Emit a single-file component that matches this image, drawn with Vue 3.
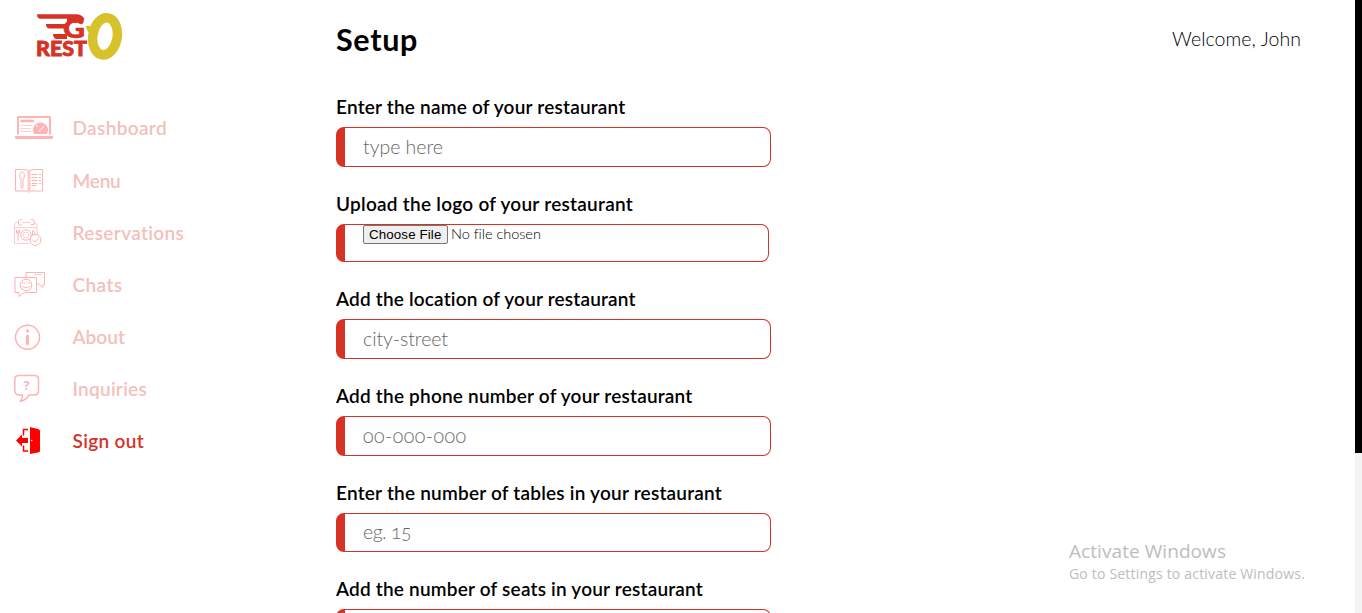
<script setup>
const vFit = {
  mounted(el, { value }) {
    const range = document.createRange()
    range.selectNodeContents(el)
    const natural = range.getBoundingClientRect().width
    const count = el.textContent.trim().length
    el.style.letterSpacing = `${(value - natural) / count}px`
  },
}

const nav = [
  { id: 'dashboard', label: 'Dashboard', fit: 94.5 },
  { id: 'menu', label: 'Menu', fit: 48 },
  { id: 'reservations', label: 'Reservations', fit: 112 },
  { id: 'chats', label: 'Chats', fit: 50 },
  { id: 'about', label: 'About', fit: 52.5 },
  { id: 'inquiries', label: 'Inquiries', fit: 74.5 },
  { id: 'signout', label: 'Sign out', fit: 71.5, active: true },
]

const fields = [
  { label: 'Enter the name of your restaurant', fit: 289.5, hint: 'type here', hintFit: 80 },
  { label: 'Upload the logo of your restaurant', fit: 297, file: true },
  { label: 'Add the location of your restaurant', fit: 300, hint: 'city-street', hintFit: 85 },
  { label: 'Add the phone number of your restaurant', fit: 356.5, hint: '00-000-000', hintFit: 103.5 },
  { label: 'Enter the number of tables in your restaurant', fit: 386, hint: 'eg. 15', hintFit: 48 },
  { label: 'Add the number of seats in your restaurant', fit: 367, hint: '' },
]
</script>

<template>
  <div class="page">
    <aside class="sidebar">
      <svg class="logo" width="88" height="50" viewBox="0 0 88 50">
        <path d="M1 2.300H40Q46 2.500 48.500 7L46 10.500Q42 6.800 36 6.800H4Q1 6.500 1 2.300Z" fill="#d63226" />
        <path d="M10 12H31L29 16.500H13Q10 16 10 12ZM17 22H31L31 27H20Q17 26 17 22Z" fill="#d63226" />
        <path d="M31 6H42L36 10L31 14Z" fill="#d63226" />
        <text x="27" y="26.300" class="logo-g" textLength="22" lengthAdjust="spacingAndGlyphs">G</text>
        <text x="0" y="44.300" class="logo-rest" textLength="51" lengthAdjust="spacingAndGlyphs">REST</text>
        <path d="M49.500 14H55L54 20H52Z" fill="#d8c22c" />
        <ellipse cx="69" cy="24.300" rx="12.200" ry="18.700" transform="rotate(9 69 24.300)" fill="none" stroke="#d8c22c" stroke-width="9.500" />
      </svg>
      <nav class="nav">
        <a v-for="item in nav" :key="item.id" class="nav-item" :class="{ active: item.active }">
          <span class="icon">
            <svg v-if="item.id === 'dashboard'" width="40" height="30" viewBox="0 0 40 30">
              <path d="M4 21.500V4.500Q4 4 4.500 4H35.500Q36 4 36 4.500V21.500" class="line frame" />
              <path d="M1 23H39V24.500Q39 26 37 26H3Q1 26 1 24.500Z" fill="currentColor" />
              <path d="M6.500 8H20" class="line bar" />
              <path d="M6.500 12.500H18M6.500 15.500H17M6.500 18.500H17" class="line faint" />
              <path d="M20 21A7.600 7.600 0 1 1 33 21Z" fill="currentColor" />
              <path d="M25 18.500L30 13M22.500 12.500L23.500 13.500" class="mark" />
            </svg>
            <svg v-else-if="item.id === 'menu'" width="40" height="30" viewBox="0 0 40 30">
              <path d="M15 5Q13 3.500 9 3.500H1.500V25H13Q14 25 15 26.500Q16 25 17 25H28.500V3.500H21Q17 3.500 15 5ZM14.200 5V25M15.800 5V25" class="line" />
              <path d="M8 6C6.500 6 5.500 8 5.500 10C5.500 11.500 6.500 12.500 7 13.500V21Q8 23 9 21V13.500C9.500 12.500 10.500 11.500 10.500 10C10.500 8 9.500 6 8 6Z" class="line" />
              <path d="M17.500 8.500H23.500M17.500 11.500H23.500M17.500 14.500H23.500M17.500 17.500H23.500M17.500 19.500H22.500M25 8.500H27M25 11.500H27M25 14.500H27M25 17.500H27" class="line" />
            </svg>
            <svg v-else-if="item.id === 'reservations'" width="40" height="30" viewBox="0 0 40 30">
              <path d="M.5 6V25.500H15M23 6V17M.5 9.500H23M.5 6.500L2 4H4M8 4.500H17M21 4L23 6.500" class="line faint" />
              <path d="M4.500 6.500V3L6 1.500H8M5 7H8M17 1.500H19L20 3V6.500H17" class="line" />
              <path d="M2.500 12V15H5.500V12M4 12V23M18.500 22V13Q21 12 21 17H19" class="line" />
              <circle cx="12" cy="17" r="5.200" class="line" />
              <circle cx="12" cy="17" r="3" class="line faint" />
              <circle cx="21.500" cy="22" r="5.500" class="line solid" />
              <path d="M18.500 22L21 24L25 19.500" class="line" />
            </svg>
            <svg v-else-if="item.id === 'chats'" width="40" height="30" viewBox="0 0 40 30">
              <path d="M12 7.500V2.500H30.500V14.500H29V17.500L24.500 14H23" class="line" />
              <path d="M20 4.500H28" class="line faint" />
              <path d="M1 7.500H22.500V22.500H10.500L5 26.500V22.500H1Z" class="line" />
              <circle cx="12" cy="15" r="5.800" class="line" />
              <path d="M8 13.500L9.500 12.500L11 13.500M13 13.500L14.500 12.500L16 13.500M8.500 16Q12 19.500 15.500 16" class="line" />
            </svg>
            <svg v-else-if="item.id === 'about'" width="40" height="30" viewBox="0 0 40 30">
              <circle cx="13.500" cy="15.200" r="12" class="line ring" />
              <circle cx="13.500" cy="8.900" r="1.600" fill="currentColor" />
              <rect x="12" y="12.700" width="3" height="10.500" rx="1.400" fill="currentColor" />
            </svg>
            <svg v-else-if="item.id === 'inquiries'" width="40" height="30" viewBox="0 0 40 30">
              <path d="M5 1.500H20Q24.500 1.500 24.500 5.700V16.700Q24.500 20.900 20 20.900H15Q12 26.700 6.500 27.200Q9 23.700 8.500 20.900H5Q.8 20.700 .8 16.700V5.700Q.8 1.500 5 1.500Z" class="line ring" />
              <text x="12.500" y="16" class="question">?</text>
            </svg>
            <svg v-else width="40" height="30" viewBox="0 0 40 30">
              <path d="M16 1L24 3Q26 3.500 26 4.500V25Q26 26 24 26.500L16 28Z" fill="currentColor" />
              <path d="M2 14.500L8 8.500V12H14V17H8V20.500Z" fill="currentColor" />
              <path d="M9.500 9.500V3.500H14M9.500 19.500V25H14" class="line thick" />
              <circle cx="17.700" cy="14.500" r=".8" fill="#fff" />
            </svg>
          </span>
          <span v-fit="item.fit" class="nav-label">{{ item.label }}</span>
        </a>
      </nav>
    </aside>

    <main class="content">
      <header class="header">
        <h1 v-fit="82" class="title">Setup</h1>
        <span v-fit="129" class="welcome">Welcome, John</span>
      </header>
      <form class="form">
        <div v-for="field in fields" :key="field.label" class="field">
          <div class="label"><span v-fit="field.fit">{{ field.label }}</span></div>
          <div class="input" :class="{ file: field.file, short: field.hint === 'eg. 15' }">
            <template v-if="field.file">
              <span class="choose"><span v-fit="72.500">Choose File</span></span>
              <span v-fit="89.500" class="filename">No file chosen</span>
            </template>
            <span v-else-if="field.hint" v-fit="field.hintFit" class="hint">{{ field.hint }}</span>
          </div>
        </div>
      </form>
    </main>

    <div class="scroll"><div class="thumb"></div></div>

    <div class="watermark">
      <div class="wm-title"><span v-fit="157">Activate Windows</span></div>
      <div class="wm-sub"><span v-fit="236">Go to Settings to activate Windows.</span></div>
    </div>
  </div>
</template>

<style>
html, body { margin: 0; overflow: hidden; background: #fff; }
</style>

<style scoped>
.page {
  display: flex;
  position: relative;
  width: 1362px;
  height: 613px;
  overflow: hidden;
  background: #fff;
  color: #000;
  font-family: Lato, "Open Sans", sans-serif;
  white-space: nowrap;
}
.sidebar { width: 336px; flex: none; }
.logo { display: block; margin: 12px 0 0 36px; }
.logo-g { font: 900 27px Lato, sans-serif; fill: #d63226; stroke: #d63226; stroke-width: .6; }
.logo-rest { font: 900 20px Lato, sans-serif; fill: #d63226; stroke: #d63226; stroke-width: .8; }
.nav { margin-top: 40.4px; }
.nav-item { display: flex; align-items: center; height: 52.15px; padding-left: 14px; color: #ffb3b3; }
.icon { width: 58.5px; height: 30px; flex: none; }
.icon svg { display: block; }
.line { fill: none; stroke: currentColor; stroke-width: 1; }
.solid { fill: #fff; }
.thick { stroke-width: 1.5; }
.frame { stroke-width: 2; }
.bar { stroke-width: 2.5; }
.faint { opacity: .65; }
.ring { stroke-width: 1.5; }
.mark { fill: none; stroke: #fff; stroke-width: 1.1; }
.question { font: 700 12px "Open Sans", sans-serif; fill: currentColor; text-anchor: middle; }
.nav-label { font-size: 19px; line-height: 24px; font-weight: 600; color: #f3c0bc; }
.active { color: #f00; }
.active .nav-label { color: #d63226; }
.content { flex: 1; min-width: 0; }
.header { display: flex; justify-content: space-between; align-items: center; height: 78px; padding-right: 54px; }
.title { margin: 0; font-size: 30.5px; font-weight: 700; line-height: 40px; }
.welcome { font-size: 19.5px; font-weight: 300; line-height: 24px; }
.form { display: flex; flex-direction: column; gap: 27px; margin-top: 19px; }
.field { display: flex; flex-direction: column; gap: 10px; }
.label { height: 20px; font-size: 19px; font-weight: 600; line-height: 20px; }
.input {
  box-sizing: border-box;
  display: flex;
  align-items: center;
  width: 435px;
  height: 40px;
  padding-left: 18px;
  border: 1px solid #d63226;
  border-left-width: 9px;
  border-radius: 8px;
}
.input.short { height: 39px; }
.input.file { width: 433px; height: 38px; align-items: flex-start; }
.hint { padding-bottom: 1px; font-size: 19.5px; font-weight: 300; line-height: 24px; color: #666; font-variant-numeric: oldstyle-nums; }
.choose {
  box-sizing: border-box;
  height: 19px;
  width: 85px;
  padding-left: 5px;
  border: 1px solid #767676;
  border-radius: 2px;
  background: #efefef;
  font: 13.333px/17px "Liberation Sans", Arial, sans-serif;
}
.filename { margin-left: 3px; font-size: 14.5px; font-weight: 300; line-height: 18px; }
.scroll { width: 7px; flex: none; background: #f4f4f4; }
.thumb { height: 453px; background: #000; }
.watermark { position: absolute; left: 1069px; top: 538px; color: #bdbdbd; font-family: "Open Sans", "Noto Sans", sans-serif; }
.wm-title { font-size: 19px; line-height: 26px; }
.wm-sub { font-size: 14px; line-height: 20px; }
</style>
